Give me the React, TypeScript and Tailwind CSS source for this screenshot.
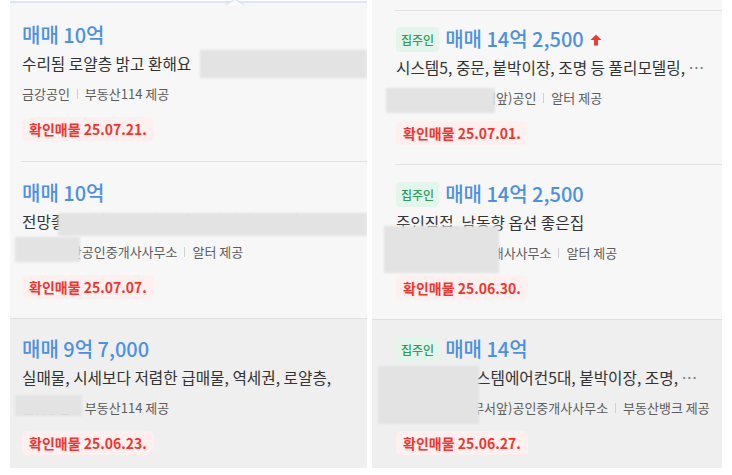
import React from 'react'

type Box = { top: number; left: number; width: number; height: number }

interface Listing {
  price: string
  desc: string
  more?: boolean
  agent: string
  provider: string
  date: string
  owner?: boolean
  up?: boolean
  boxes?: Box[]
}

const leftList: Listing[] = [
  {
    price: '매매 10억',
    desc: '수리됨 로얄층 밝고 환해요',
    agent: '금강공인',
    provider: '부동산114 제공',
    date: '확인매물 25.07.21.',
    boxes: [{ top: 47, left: 190, width: 167, height: 28 }],
  },
  {
    price: '매매 10억',
    desc: '전망좋은 남향 올수리 급매물 입니다 즉시입주',
    agent: '역삼래미안공인중개사사무소',
    provider: '알터 제공',
    date: '확인매물 25.07.07.',
    boxes: [
      { top: 52, left: 48, width: 309, height: 23 },
      { top: 76, left: 5, width: 65, height: 25 },
    ],
  },
  {
    price: '매매 9억 7,000',
    desc: '실매물, 시세보다 저렴한 급매물, 역세권, 로얄층,',
    agent: '한빛공인',
    provider: '부동산114 제공',
    date: '확인매물 25.06.23.',
    boxes: [{ top: 76, left: 5, width: 67, height: 21 }],
  },
]

const rightList: Listing[] = [
  {
    price: '매매 14억 2,500',
    desc: '시스템5, 중문, 붙박이장, 조명 등 풀리모델링,',
    more: true,
    agent: '래미안대치(역삼역앞)공인',
    provider: '알터 제공',
    date: '확인매물 25.07.01.',
    owner: true,
    up: true,
    boxes: [{ top: 78, left: 14, width: 109, height: 25 }],
  },
  {
    price: '매매 14억 2,500',
    desc: '주인직접, 남동향 옵션 좋은집',
    agent: '래미안대치공인중개사사무소',
    provider: '알터 제공',
    date: '확인매물 25.06.30.',
    owner: true,
    boxes: [{ top: 62, left: 12, width: 115, height: 47 }],
  },
  {
    price: '매매 14억',
    desc: '올수리됨, 시스템에어컨5대, 붙박이장, 조명,',
    more: true,
    agent: '래미안(강남세무서앞)공인중개사사무소',
    provider: '부동산뱅크 제공',
    date: '확인매물 25.06.27.',
    owner: true,
    boxes: [{ top: 46, left: 6, width: 101, height: 58 }],
  },
]

function UpArrow() {
  return (
    <svg width="12" height="12" viewBox="0 0 12 12" className="ml-[6px] mt-[2px]">
      <path d="M6 0.5 L11.5 6 H8 V11.5 H4 V6 H0.5 Z" fill="#f03a36" />
    </svg>
  )
}

function Body({ item }: { item: Listing }) {
  return (
    <div className="flex flex-col items-start">
      <div className="flex items-center h-[26px]">
        {item.owner && (
          <span className="h-[25px] px-[5px] mr-[6px] rounded-[4px] bg-[#e4f6eb] text-[#2f9d5b] text-[12px] font-medium leading-[25px]">
            집주인
          </span>
        )}
        <span className="text-[20px] font-medium leading-[26px] text-[#4d90e3]">{item.price}</span>
        {item.up && <UpArrow />}
      </div>
      <p className="mt-[5px] text-[15.7px] leading-[22px] text-[#333] whitespace-nowrap">
        {item.desc}
        {item.more && <span className="text-[#777]"> …</span>}
      </p>
      <div className="mt-[10px] flex items-center text-[13px] leading-[18px] text-[#5c5c5c] whitespace-nowrap">
        <span>{item.agent}</span>
        <span className="mx-[7px] w-px h-[10px] bg-[#cfcfcf]" />
        <span>{item.provider}</span>
      </div>
      <span className="mt-[14px] h-[24px] px-[7px] rounded-[5px] bg-[#fff0f0] text-[#f2342f] text-[14px] font-bold leading-[24px]">
        {item.date}
      </span>
    </div>
  )
}

function Card({
  item,
  sep,
  inset,
  height,
  pt,
}: {
  item: Listing
  sep: 'none' | 'inset' | 'full'
  inset: number
  height: number
  pt: number
}) {
  const hover = sep === 'full'
  return (
    <div
      className={`relative overflow-hidden ${hover ? 'bg-[#efefef] border-t border-[#e0e0e0]' : ''}`}
      style={{ height, paddingLeft: hover ? inset + 1 : 0 }}
    >
      <div
        className={sep === 'inset' ? 'border-t border-[#e2e2e2] h-full' : 'h-full'}
        style={{ marginLeft: hover ? 0 : inset, paddingLeft: hover ? 0 : 1, paddingTop: pt }}
      >
        <Body item={item} />
      </div>
      {item.boxes?.map((b, i) => (
        <div
          key={i}
          className="absolute bg-[#e3e3e3] blur-[1px]"
          style={{ top: b.top, left: b.left, width: b.width, height: b.height }}
        />
      ))}
    </div>
  )
}

export default function App() {
  return (
    <div className="w-[732px] h-[475px] bg-white flex items-start gap-[5px] pl-[10px] overflow-hidden font-['Noto_Sans_CJK_KR','Noto_Sans',sans-serif]">
      {/* left list */}
      <div className="relative w-[357px] mt-[1px] bg-[#f7f7f7] border-t-2 border-[#dbe7f4]">
        <svg width="18" height="8" viewBox="0 0 18 8" className="absolute left-[216px] top-[-4px]">
          <path d="M0 6 L9 0 L18 6" fill="#ffffff" stroke="#dbe7f4" strokeWidth="1.5" />
        </svg>
        <Card item={leftList[0]} sep="none" inset={11} height={158} pt={19} />
        <Card item={leftList[1]} sep="inset" inset={11} height={157} pt={18} />
        <Card item={leftList[2]} sep="full" inset={11} height={150} pt={17} />
      </div>

      {/* right list */}
      <div className="w-[350px] bg-[#f7f7f7] pt-[10px]">
        <Card item={rightList[0]} sep="inset" inset={23} height={154} pt={15} />
        <Card item={rightList[1]} sep="inset" inset={23} height={155} pt={16} />
        <Card item={rightList[2]} sep="full" inset={23} height={149} pt={16} />
      </div>
    </div>
  )
}
